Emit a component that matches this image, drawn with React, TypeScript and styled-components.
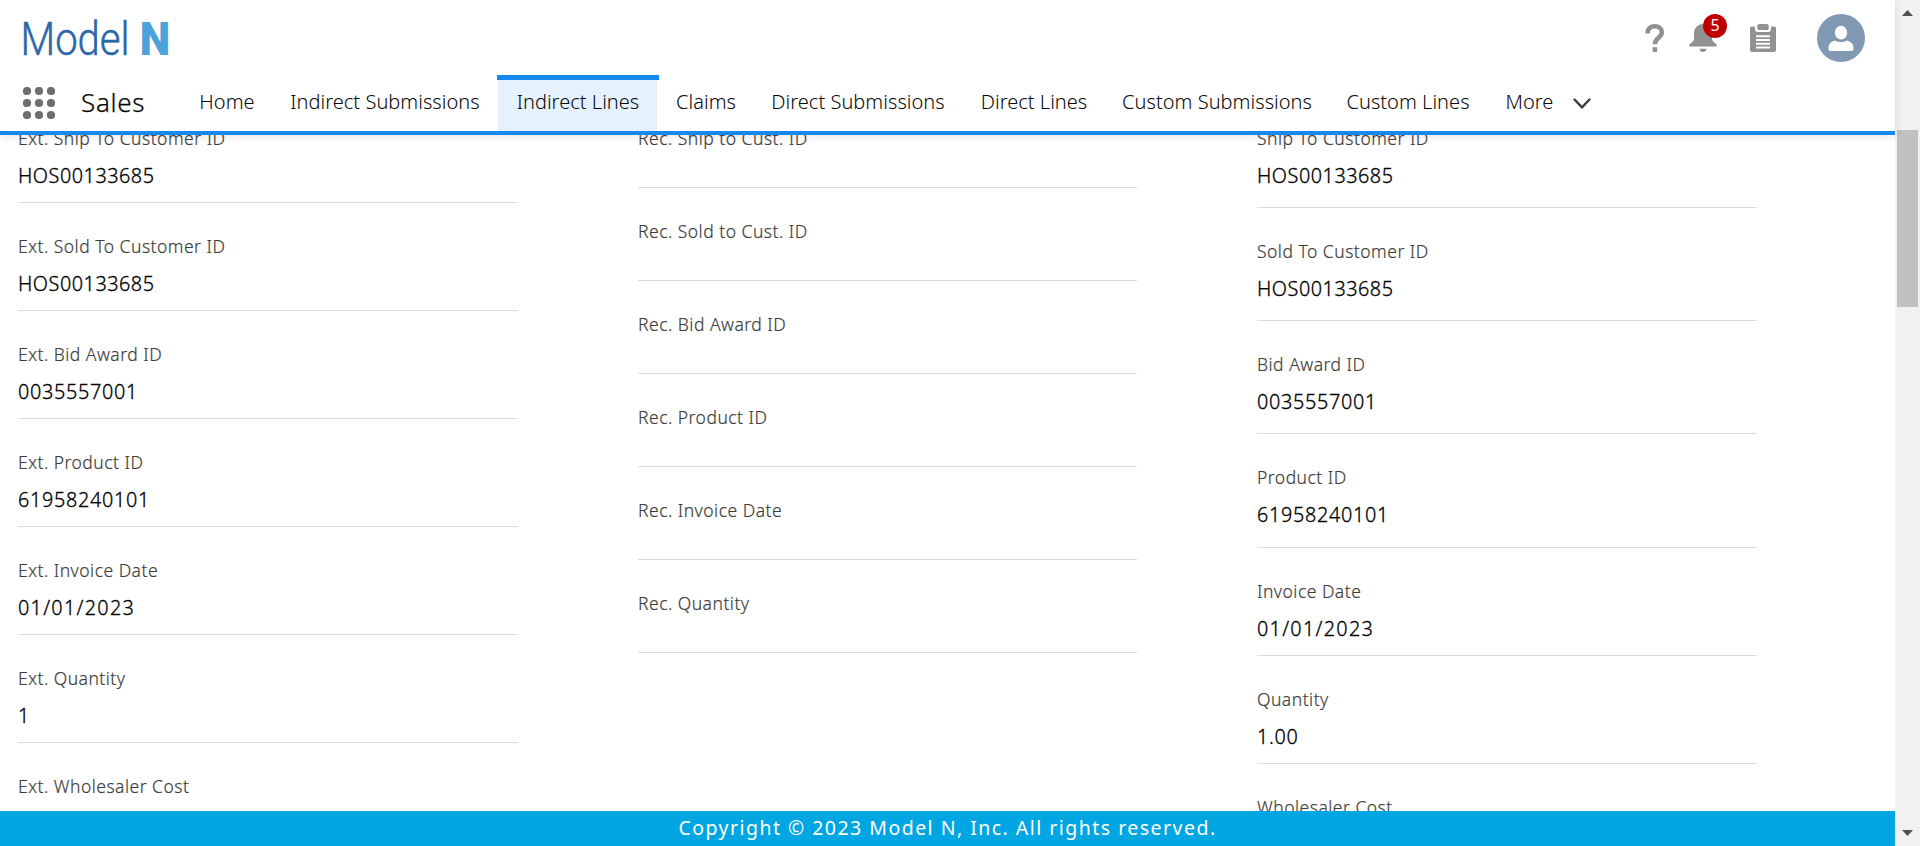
import React from 'react';
import styled, { createGlobalStyle } from 'styled-components';

const GlobalStyle = createGlobalStyle`
  * { box-sizing: border-box; }
  body { margin: 0; background: #fff; font-family: "Noto Sans", sans-serif; overflow: hidden; }
`;

const Window = styled.div`
  display: flex;
  width: 1920px;
  height: 846px;
  overflow: hidden;
`;

const Page = styled.div`
  flex: 1;
  display: flex;
  flex-direction: column;
  height: 100%;
  min-width: 0;
`;

const Header = styled.header`
  flex: none;
  height: 135px;
  display: flex;
  flex-direction: column;
  background: #fff;
  border-bottom: 4px solid #1589ee;
  box-shadow: 0 2px 8px rgba(0, 0, 0, 0.1);
  z-index: 1;
`;

const Brand = styled.div`
  height: 75px;
  display: flex;
  align-items: flex-start;
  justify-content: space-between;
`;

const Logo = styled.svg`
  display: block;
  width: 180px;
  height: 75px;
`;

const Tools = styled.div`
  display: flex;
  align-items: flex-start;
  padding: 14px 30px 0 0;
`;

const Tool = styled.div<{ $gap: number }>`
  position: relative;
  height: 48px;
  margin-right: ${(p) => p.$gap}px;
  svg { display: block; }
`;

const Badge = styled.span`
  position: absolute;
  left: 14px;
  top: 0;
  width: 24px;
  height: 24px;
  border-radius: 50%;
  background: #c00000;
  color: #fff;
  font-size: 16px;
  line-height: 22px;
  text-align: center;
`;

const Nav = styled.nav`
  height: 56px;
  display: flex;
`;

const Launcher = styled.div`
  width: 81px;
  padding: 12px 0 0 23px;
  svg { display: block; }
`;

const AppName = styled.div`
  width: 100px;
  color: #080707;
  font-size: 26px;
  font-weight: 300;
  letter-spacing: 0.7px;
  -webkit-text-stroke: 0.25px;
  line-height: 54px;
  white-space: nowrap;
`;

const Tab = styled.a<{ $width: number; $active?: boolean }>`
  width: ${(p) => p.$width}px;
  height: 56px;
  border-top: 5px solid ${(p) => (p.$active ? '#1589ee' : 'transparent')};
  background: ${(p) =>
    p.$active ? 'linear-gradient(#e5f2fe, #e5f2fe) 1px 0 / calc(100% - 3px) 100% no-repeat' : 'none'};
  color: #080707;
  font-size: 20px;
  font-weight: 300;
  letter-spacing: 0.03px;
  padding-left: ${(p) => (p.$active ? 0 : 1)}px;
  line-height: 43px;
  text-align: center;
  white-space: nowrap;
`;

const Chevron = styled.svg`
  margin: 23px 0 0 1px;
`;

const Fields = styled.main`
  flex: 1;
  min-height: 0;
  overflow: hidden;
  display: flex;
  gap: 120px;
  padding-left: 18px;
`;

const Column = styled.section<{ $lift: number; $width: number }>`
  width: ${(p) => p.$width}px;
  margin-top: -${(p) => p.$lift}px;
`;

const Field = styled.div<{ $height: number }>`
  height: ${(p) => p.$height}px;
  padding-top: 30px;
  border-bottom: 1px solid #dddbda;
`;

const Label = styled.div`
  color: #3e3e3c;
  font-size: 17.5px;
  font-weight: 300;
  letter-spacing: 0.49px;
  -webkit-text-stroke: 0.2px;
  line-height: 26px;
  white-space: nowrap;
`;

const Value = styled.div<{ $tracking: number }>`
  margin-top: 11px;
  color: #000;
  font-size: 19.8px;
  font-weight: 300;
  letter-spacing: ${(p) => p.$tracking}px;
  -webkit-text-stroke: 0.3px;
  line-height: 28px;
  white-space: nowrap;
`;

const Footer = styled.footer`
  flex: none;
  height: 35px;
  background: #00a6e2;
  color: #fff;
  font-size: 19.5px;
  letter-spacing: 1.47px;
  line-height: 34px;
  text-align: center;
  z-index: 1;
`;

const Scrollbar = styled.div`
  width: 25px;
  height: 846px;
  background: #f1f1f1;
  display: flex;
  flex-direction: column;
  align-items: center;
  justify-content: space-between;
  padding: 10px 0;
`;

const Thumb = styled.div`
  width: 21px;
  height: 177px;
  margin: 114px 0 auto;
  background: #c1c1c1;
`;

const tabs = [
  { name: 'Home', width: 91 },
  { name: 'Indirect Submissions', width: 225 },
  { name: 'Indirect Lines', width: 162, active: true },
  { name: 'Claims', width: 93 },
  { name: 'Direct Submissions', width: 211 },
  { name: 'Direct Lines', width: 141 },
  { name: 'Custom Submissions', width: 225 },
  { name: 'Custom Lines', width: 157 },
  { name: 'More', width: 86 },
];

type Entry = { label: string; value?: string; height: number };

const external: Entry[] = [
  { label: 'Ext. Ship To Customer ID', value: 'HOS00133685', height: 108 },
  { label: 'Ext. Sold To Customer ID', value: 'HOS00133685', height: 108 },
  { label: 'Ext. Bid Award ID', value: '0035557001', height: 108 },
  { label: 'Ext. Product ID', value: '61958240101', height: 108 },
  { label: 'Ext. Invoice Date', value: '01/01/2023', height: 108 },
  { label: 'Ext. Quantity', value: '1', height: 108 },
  { label: 'Ext. Wholesaler Cost', height: 108 },
];

const recommended: Entry[] = [
  'Rec. Ship to Cust. ID',
  'Rec. Sold to Cust. ID',
  'Rec. Bid Award ID',
  'Rec. Product ID',
  'Rec. Invoice Date',
  'Rec. Quantity',
].map((label) => ({ label, height: 93 }));

const resolved: Entry[] = [
  { label: 'Ship To Customer ID', value: 'HOS00133685', height: 113 },
  { label: 'Sold To Customer ID', value: 'HOS00133685', height: 113 },
  { label: 'Bid Award ID', value: '0035557001', height: 113 },
  { label: 'Product ID', value: '61958240101', height: 114 },
  { label: 'Invoice Date', value: '01/01/2023', height: 108 },
  { label: 'Quantity', value: '1.00', height: 108 },
  { label: 'Wholesaler Cost', height: 108 },
];

// Dates get the widest tracking, codes that start with letters the tightest.
const trackingOf = (value: string) => (value.includes('/') ? 1.3 : /^[A-Z]/.test(value) ? 0.53 : 0.7);

function FieldColumn({ entries, lift, width = 500 }: { entries: Entry[]; lift: number; width?: number }) {
  return (
    <Column $lift={lift} $width={width}>
      {entries.map((e) => (
        <Field key={e.label} $height={e.height}>
          <Label>{e.label}</Label>
          {e.value && <Value $tracking={trackingOf(e.value)}>{e.value}</Value>}
        </Field>
      ))}
    </Column>
  );
}

export default function App() {
  return (
    <Window>
      <GlobalStyle />
      <Page>
        <Header>
          <Brand>
            <Logo viewBox="0 0 180 75">
              <text x="20.500" y="54.500" fontFamily="Roboto" fontWeight="300" fontSize="47" fill="#2b66a8" stroke="#2b66a8" strokeWidth="0.500" textLength="109" lengthAdjust="spacingAndGlyphs">Model</text>
              <text x="139.800" y="54.500" fontFamily="Roboto" fontWeight="900" fontSize="47" fill="#4aa3da" textLength="30.500" lengthAdjust="spacingAndGlyphs">N</text>
            </Logo>
            <Tools>
              <Tool $gap={24}>
                <svg width="20" height="48" viewBox="0 0 20 48" fill="none" stroke="#919191">
                  <path d="M2.600 19.500C2.600 14.500 5.800 12.300 9.800 12.300c4.100 0 7 2.400 7 6 0 5.600-6.900 5.500-6.900 11.900" strokeWidth="4.600" />
                  <path d="M9.900 33.200v4.800" strokeWidth="4.600" />
                </svg>
              </Tool>
              <Tool $gap={33}>
                <svg width="28" height="48" viewBox="0 0 28 48" fill="#919191">
                  <path d="M14 10c-5 0-9 4-9 9v5c0 3-1.500 4-3.600 5.600C-.6 31.200.2 32.500 1.500 32.500h25c1.300 0 2.100-1.300.1-2.900C24.500 28 23 27 23 24v-5c0-5-4-9-9-9z" />
                  <path d="M10.500 34.800h7c0 1.700-1.500 3.200-3.500 3.200s-3.500-1.500-3.500-3.200z" />
                </svg>
                <Badge>5</Badge>
              </Tool>
              <Tool $gap={41}>
                <svg width="26" height="48" viewBox="0 0 26 48">
                  <path fill="#919191" d="M2 12.500h3v2.500c0 2 1 3 2.500 3h11c1.500 0 2.500-1 2.500-3v-2.500h3c1.200 0 2 .8 2 2V36c0 1.200-.8 2-2 2H2c-1.200 0-2-.8-2-2V14.500c0-1.200.8-2 2-2z" />
                  <path fill="#919191" d="M9.500 10h7c1.300 0 2.200.9 2.200 2.200v2.400c0 .9-.6 1.500-1.500 1.500H8.800c-.9 0-1.500-.6-1.500-1.500v-2.400C7.300 10.900 8.200 10 9.500 10z" />
                  <path stroke="#fff" strokeWidth="2" d="M6 22.200h14M6 26h14M6 29.800h14M6 33.500h14" />
                </svg>
              </Tool>
              <Tool $gap={0}>
                <svg width="48" height="48" viewBox="0 0 48 48">
                  <circle cx="24" cy="24" r="24" fill="#8199b3" />
                  <ellipse cx="24" cy="18.700" rx="6.200" ry="6.900" fill="#fff" />
                  <path fill="#fff" d="M18 26.500c1.700 1.100 3.700 1.700 6 1.700s4.300-.6 6-1.700c3.800 1 6.500 3.500 6.500 7.300v1.200c0 1.200-.8 2-2 2h-21c-1.200 0-2-.8-2-2v-1.200c0-3.800 2.700-6.300 6.500-7.300z" />
                </svg>
              </Tool>
            </Tools>
          </Brand>
          <Nav>
            <Launcher>
              <svg width="32" height="32" viewBox="0 0 32 32" fill="#706e6b">
                {[4, 16, 28].map((y) => [4, 16, 28].map((x) => <circle key={`${x}-${y}`} cx={x} cy={y} r="4.100" />))}
              </svg>
            </Launcher>
            <AppName>Sales</AppName>
            {tabs.map((t) => (
              <Tab key={t.name} $width={t.width} $active={t.active}>{t.name}</Tab>
            ))}
            <Chevron width="18" height="12" viewBox="0 0 18 12" fill="none" stroke="#3e3e3c" strokeWidth="2.400" strokeLinecap="round" strokeLinejoin="round">
              <path d="M1.500 1.500 9 9.300l7.500-7.800" />
            </Chevron>
          </Nav>
        </Header>
        <Fields>
          <FieldColumn entries={external} lift={40} />
          <FieldColumn entries={recommended} lift={40} width={499} />
          <FieldColumn entries={resolved} lift={40} />
        </Fields>
        <Footer>Copyright © 2023 Model N, Inc. All rights reserved.</Footer>
      </Page>
      <Scrollbar>
        <svg width="11" height="6" viewBox="0 0 11 6"><path d="M5.500 0 11 6H0z" fill="#505050" /></svg>
        <Thumb />
        <svg width="11" height="6" viewBox="0 0 11 6"><path d="M0 0h11L5.500 6z" fill="#505050" /></svg>
      </Scrollbar>
    </Window>
  );
}
